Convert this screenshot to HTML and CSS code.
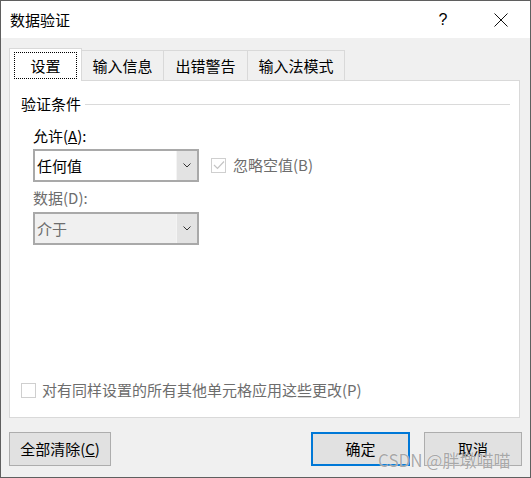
FILE: index.html
```html
<!DOCTYPE html>
<html lang="zh-CN">
<head>
    <meta charset="UTF-8">
    <meta name="viewport" content="width=device-width, initial-scale=1.0">
    <title>数据验证</title>
    <link rel="stylesheet" href="styles.css">
</head>
<body>

    <div class="dialog">
        <div class="titlebar">
            <span class="title">数据验证</span>
            <span class="title-btn help">?</span>
            <span class="title-btn close">
                <svg width="14" height="14" viewBox="0 0 14 14">
                    <path d="M0.5 0.5 L13.5 13.5 M13.5 0.5 L0.5 13.5" stroke="#111" stroke-width="1" fill="none"/>
                </svg>
            </span>
        </div>

        <div class="dialog-body">
            <div class="tabs">
                <div class="tab active"><span class="focus">设置</span></div>
                <div class="tab tab-2">输入信息</div>
                <div class="tab tab-3">出错警告</div>
                <div class="tab tab-4">输入法模式</div>
            </div>

            <div class="panel">
                <div class="group-title">
                    <span>验证条件</span>
                    <span class="group-line"></span>
                </div>

                <div class="field-label">允许(<u>A</u>):</div>
                <div class="field-row">
                    <div class="combo">
                        <span class="combo-text">任何值</span>
                        <span class="combo-arrow">
                            <svg width="8" height="5" viewBox="0 0 8 5"><path d="M0.5 0.5 L4 4 L7.5 0.5" stroke="#333" fill="none"/></svg>
                        </span>
                    </div>
                    <label class="check disabled">
                        <span class="box">
                            <svg width="12" height="10" viewBox="0 0 12 10"><path d="M1 5 L4.5 8.5 L11 1.5" stroke="#c4c4c4" stroke-width="1.2" fill="none"/></svg>
                        </span>
                        忽略空值(B)
                    </label>
                </div>

                <div class="field-label disabled">数据(D):</div>
                <div class="field-row">
                    <div class="combo combo-disabled">
                        <span class="combo-text">介于</span>
                        <span class="combo-arrow">
                            <svg width="8" height="5" viewBox="0 0 8 5"><path d="M0.5 0.5 L4 4 L7.5 0.5" stroke="#333" fill="none"/></svg>
                        </span>
                    </div>
                </div>

                <label class="check disabled apply-all">
                    <span class="box"></span>
                    对有同样设置的所有其他单元格应用这些更改(P)
                </label>
            </div>

            <div class="footer">
                <button class="btn btn-clear">全部清除(<u>C</u>)</button>
                <button class="btn btn-ok">确定</button>
                <button class="btn btn-cancel">取消</button>
            </div>
        </div>

        <div class="watermark">CSDN @胖墩喵喵</div>
    </div>

</body>
</html>
```

FILE: styles.css
```css
* {
    box-sizing: border-box;
}
body {
    margin: 0;
    font-family: "Noto Sans CJK SC", "Noto Sans", sans-serif;
    font-size: 15px;
    color: #000;
    background-color: #f0f0f0;
}
.dialog {
    position: relative;
    width: 531px;
    height: 478px;
    border: 1px solid #5f5f5f;
    display: flex;
    flex-direction: column;
    background-color: #f0f0f0;
}
.titlebar {
    height: 37px;
    background-color: #fff;
    display: flex;
    align-items: center;
}
.title {
    padding-left: 9px;
    line-height: 20px;
    flex: 1;
}
.title-btn {
    display: flex;
    justify-content: center;
    align-items: center;
    height: 37px;
}
.help {
    width: 46px;
    font-family: "Liberation Sans", sans-serif;
    font-size: 16px;
    margin-right: 12px;
}
.close {
    width: 46px;
    margin-right: 6px;
}
.dialog-body {
    flex: 1;
    display: flex;
    flex-direction: column;
    padding: 10px 8px 10px 8px;
}
.tabs {
    display: flex;
    height: 32px;
    align-items: flex-end;
}
.tab {
    height: 30px;
    border: 1px solid #d9d9d9;
    border-bottom: none;
    border-left: none;
    display: flex;
    justify-content: center;
    align-items: center;
    line-height: 20px;
    background-color: #f0f0f0;
}
.tab.active {
    height: 33px;
    width: 73px;
    background-color: #fff;
    border-left: 1px solid #d9d9d9;
    margin-bottom: -1px;
    position: relative;
    z-index: 1;
    padding: 3px 4px 2px 4px;
}
.focus {
    width: 100%;
    height: 100%;
    border: 1px dotted #000;
    display: flex;
    justify-content: center;
    align-items: center;
}
.tab-2 {
    width: 82px;
}
.tab-3 {
    width: 84px;
}
.tab-4 {
    width: 97px;
}
.panel {
    height: 338px;
    width: 511px;
    background-color: #fff;
    border: 1px solid #d9d9d9;
    display: flex;
    flex-direction: column;
    padding: 13px 9px 17px 11px;
}
.group-title {
    display: flex;
    align-items: center;
    line-height: 20px;
}
.group-line {
    flex: 1;
    height: 1px;
    background-color: #dadada;
    margin-left: 4px;
}
.field-label {
    margin: 12px 0 3px 12px;
    line-height: 20px;
}
.field-label.disabled {
    margin-top: 6px;
    margin-bottom: 4px;
    color: #6d6d6d;
}
.field-row {
    display: flex;
    align-items: center;
    margin-left: 12px;
}
.combo {
    width: 166px;
    height: 33px;
    border: 2px solid #a9a9a9;
    background-color: #fff;
    display: flex;
}
.combo-disabled {
    background-color: #f0f0f0;
    color: #6d6d6d;
}
.combo-text {
    flex: 1;
    padding-left: 2px;
    line-height: 29px;
}
.combo-arrow {
    width: 21px;
    background-color: #e3e3e3;
    border-left: 1px solid #f4f4f4;
    display: flex;
    justify-content: center;
    align-items: center;
}
.check {
    display: flex;
    align-items: center;
    line-height: 20px;
}
.check.disabled {
    color: #6d6d6d;
}
.field-row .check {
    margin-left: 12px;
    margin-bottom: 1px;
}
.box {
    width: 15px;
    height: 15px;
    border: 1px solid #cfcfcf;
    background-color: #fff;
    margin-right: 7px;
    display: flex;
    justify-content: center;
    align-items: center;
}
.apply-all {
    margin-top: auto;
}
.apply-all .box {
    margin-right: 6px;
}
.footer {
    display: flex;
    margin-top: 14px;
}
.btn {
    height: 34px;
    font-family: inherit;
    font-size: 15px;
    line-height: 20px;
    color: #000;
    background-color: #e1e1e1;
    border: 1px solid #adadad;
    border-radius: 0;
    padding: 0;
}
.btn-clear {
    width: 102px;
}
.btn-ok {
    width: 99px;
    margin-left: auto;
    border: 2px solid #0078d7;
}
.btn-cancel {
    width: 98px;
    margin-left: 14px;
}
.watermark {
    position: absolute;
    left: 377px;
    top: 447px;
    font-size: 17px;
    line-height: 24px;
    color: rgba(140, 140, 140, 0.75);
    text-shadow: 0 0 1px #fff;
}
```
